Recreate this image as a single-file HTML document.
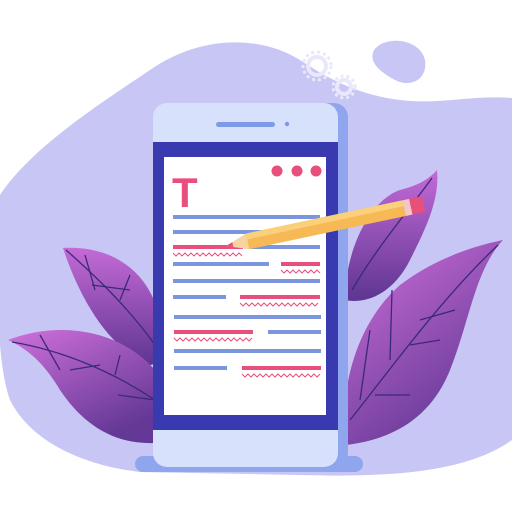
<!DOCTYPE html>
<html><head><style>html,body{margin:0;padding:0;background:#fff;width:512px;height:512px;overflow:hidden}</style></head>
<body>
<svg width="512" height="512" viewBox="0 0 512 512" xmlns="http://www.w3.org/2000/svg">
<defs>
<linearGradient id="lf" x1="0" y1="0" x2="0" y2="1"><stop offset="0" stop-color="#c46ad6"/><stop offset="1" stop-color="#5e3592"/></linearGradient>
<linearGradient id="lf2" x1="0" y1="0" x2="0.6" y2="1"><stop offset="0" stop-color="#d070db"/><stop offset="1" stop-color="#633896"/></linearGradient>
</defs>
<rect width="512" height="512" fill="#fff"/>
<path d="M0 195 C30 150 90 110 150 70 C200 35 260 35 300 60 C330 80 360 95 400 100 C440 105 470 95 512 98 L512 440 C470 470 400 478 300 475 L140 472 C80 465 30 440 10 400 C-5 360 -5 250 0 195 Z" fill="#c7c6f5"/>
<path d="M374 50 C385 35 420 38 425 60 C428 80 410 88 395 80 C380 72 368 62 374 50Z" fill="#c7c6f5"/>
<g fill="none" stroke="#e9e8fb" stroke-width="4">
<circle cx="317" cy="66" r="9"/><circle cx="344" cy="87" r="7"/>
</g>
<g stroke="#e9e8fb" stroke-width="3" stroke-dasharray="3 3"><circle cx="317" cy="66" r="14" fill="none"/><circle cx="344" cy="87" r="11" fill="none"/></g>
<!-- right back leaf -->
<path d="M345 300 C345 250 370 200 400 190 C420 185 430 178 437 170 C440 200 425 230 410 260 C395 290 370 305 345 300Z" fill="url(#lf)"/>
<path d="M345 440 C340 380 360 320 400 285 C440 255 480 245 503 240 C475 270 470 320 450 370 C430 420 390 440 345 445Z" fill="url(#lf2)"/>
<g stroke="#3a2a78" stroke-width="1.3" fill="none">
<path d="M350 420 C390 370 440 300 498 245"/><path d="M390 360 L392 290"/><path d="M420 320 L455 310"/><path d="M410 345 L440 340"/><path d="M375 395 L410 395"/><path d="M360 400 L370 330"/>
<path d="M352 290 C375 250 405 215 432 178"/>
</g>
<path d="M63 248 C110 245 150 270 160 320 C165 350 158 365 150 365 C110 350 80 300 63 248Z" fill="url(#lf)"/>
<path d="M8 340 C60 320 120 330 155 370 L155 443 C110 445 80 420 60 390 C45 365 30 350 8 340Z" fill="url(#lf2)"/>
<g stroke="#3a2a78" stroke-width="1.3" fill="none">
<path d="M66 250 C100 280 130 310 155 345"/><path d="M85 255 L95 290"/><path d="M92 285 L130 290"/><path d="M120 300 L130 275"/>
<path d="M12 342 C60 350 110 370 155 400"/><path d="M40 335 L60 370"/><path d="M70 370 L100 365"/><path d="M115 375 L120 355"/><path d="M118 395 L155 400"/>
</g>
<rect x="135" y="456" width="228" height="16" rx="8" fill="#8fa6ee"/>
<rect x="165" y="103" width="183" height="364" rx="14" fill="#8fa6ee"/>
<rect x="153" y="103" width="185" height="364" rx="14" fill="#d7e1fb"/>
<rect x="153" y="142" width="185" height="288" fill="#3a3ab0"/>
<rect x="164" y="157" width="162" height="258" fill="#fff"/>
<rect x="216" y="122" width="59" height="5" rx="2.5" fill="#7c9ae6"/>
<circle cx="287" cy="124" r="2.2" fill="#7c9ae6"/>
<text x="172" y="207" font-family="Liberation Sans, sans-serif" font-weight="bold" font-size="42" fill="#e84f7d">T</text>
<g fill="#e84f7d"><circle cx="277" cy="171" r="5.5"/><circle cx="297" cy="171" r="5.5"/><circle cx="316" cy="171" r="5.5"/></g>
<g fill="#7c96de">
<rect x="173" y="215" width="147" height="4"/>
<rect x="173" y="230" width="147" height="4"/>
<rect x="250" y="245" width="70" height="4"/>
<rect x="173" y="262" width="96" height="4"/>
<rect x="173" y="279" width="147" height="4"/>
<rect x="173" y="295" width="53" height="4"/>
<rect x="174" y="315" width="147" height="4"/>
<rect x="268" y="330" width="53" height="4"/>
<rect x="174" y="349" width="147" height="4"/>
<rect x="174" y="366" width="53" height="4"/>
</g>
<g fill="#e84f7d">
<rect x="173" y="245" width="70" height="4"/>
<rect x="281" y="262" width="39" height="4"/>
<rect x="240" y="295" width="80" height="4"/>
<rect x="174" y="330" width="79" height="4"/>
<rect x="242" y="366" width="79" height="4"/>
</g>
<g fill="none" stroke="#e84f7d" stroke-width="1">
<path d="M173 253 l3 3 l3 -3 l3 3 l3 -3 l3 3 l3 -3 l3 3 l3 -3 l3 3 l3 -3 l3 3 l3 -3 l3 3 l3 -3 l3 3 l3 -3 l3 3 l3 -3 l3 3 l3 -3 l3 3 l3 -3 l3 3"/>
<path d="M281 270 l3 3 l3 -3 l3 3 l3 -3 l3 3 l3 -3 l3 3 l3 -3 l3 3 l3 -3 l3 3 l3 -3 l3 3"/>
<path d="M240 303 l3 3 l3 -3 l3 3 l3 -3 l3 3 l3 -3 l3 3 l3 -3 l3 3 l3 -3 l3 3 l3 -3 l3 3 l3 -3 l3 3 l3 -3 l3 3 l3 -3 l3 3 l3 -3 l3 3 l3 -3 l3 3 l3 -3 l3 3 l3 -3"/>
<path d="M174 338 l3 3 l3 -3 l3 3 l3 -3 l3 3 l3 -3 l3 3 l3 -3 l3 3 l3 -3 l3 3 l3 -3 l3 3 l3 -3 l3 3 l3 -3 l3 3 l3 -3 l3 3 l3 -3 l3 3 l3 -3 l3 3 l3 -3 l3 3 l3 -3"/>
<path d="M242 374 l3 3 l3 -3 l3 3 l3 -3 l3 3 l3 -3 l3 3 l3 -3 l3 3 l3 -3 l3 3 l3 -3 l3 3 l3 -3 l3 3 l3 -3 l3 3 l3 -3 l3 3 l3 -3 l3 3 l3 -3 l3 3 l3 -3 l3 3 l3 -3"/>
</g>
<g transform="translate(226,246) rotate(-12)">
<path d="M0 0 L22 -8 L22 8 Z" fill="#f6d3a0"/>
<path d="M0 0 L7 -2.5 L7 2.5Z" fill="#e84f7d"/>
<rect x="22" y="-8" width="160" height="16" fill="#f6b956"/>
<rect x="22" y="-8" width="160" height="6" fill="#fbd07a"/>
<rect x="182" y="-8" width="7" height="16" fill="#f4c7c7"/>
<rect x="189" y="-8" width="13" height="16" fill="#e84f7d"/>
</g>
</svg>
</body></html>
